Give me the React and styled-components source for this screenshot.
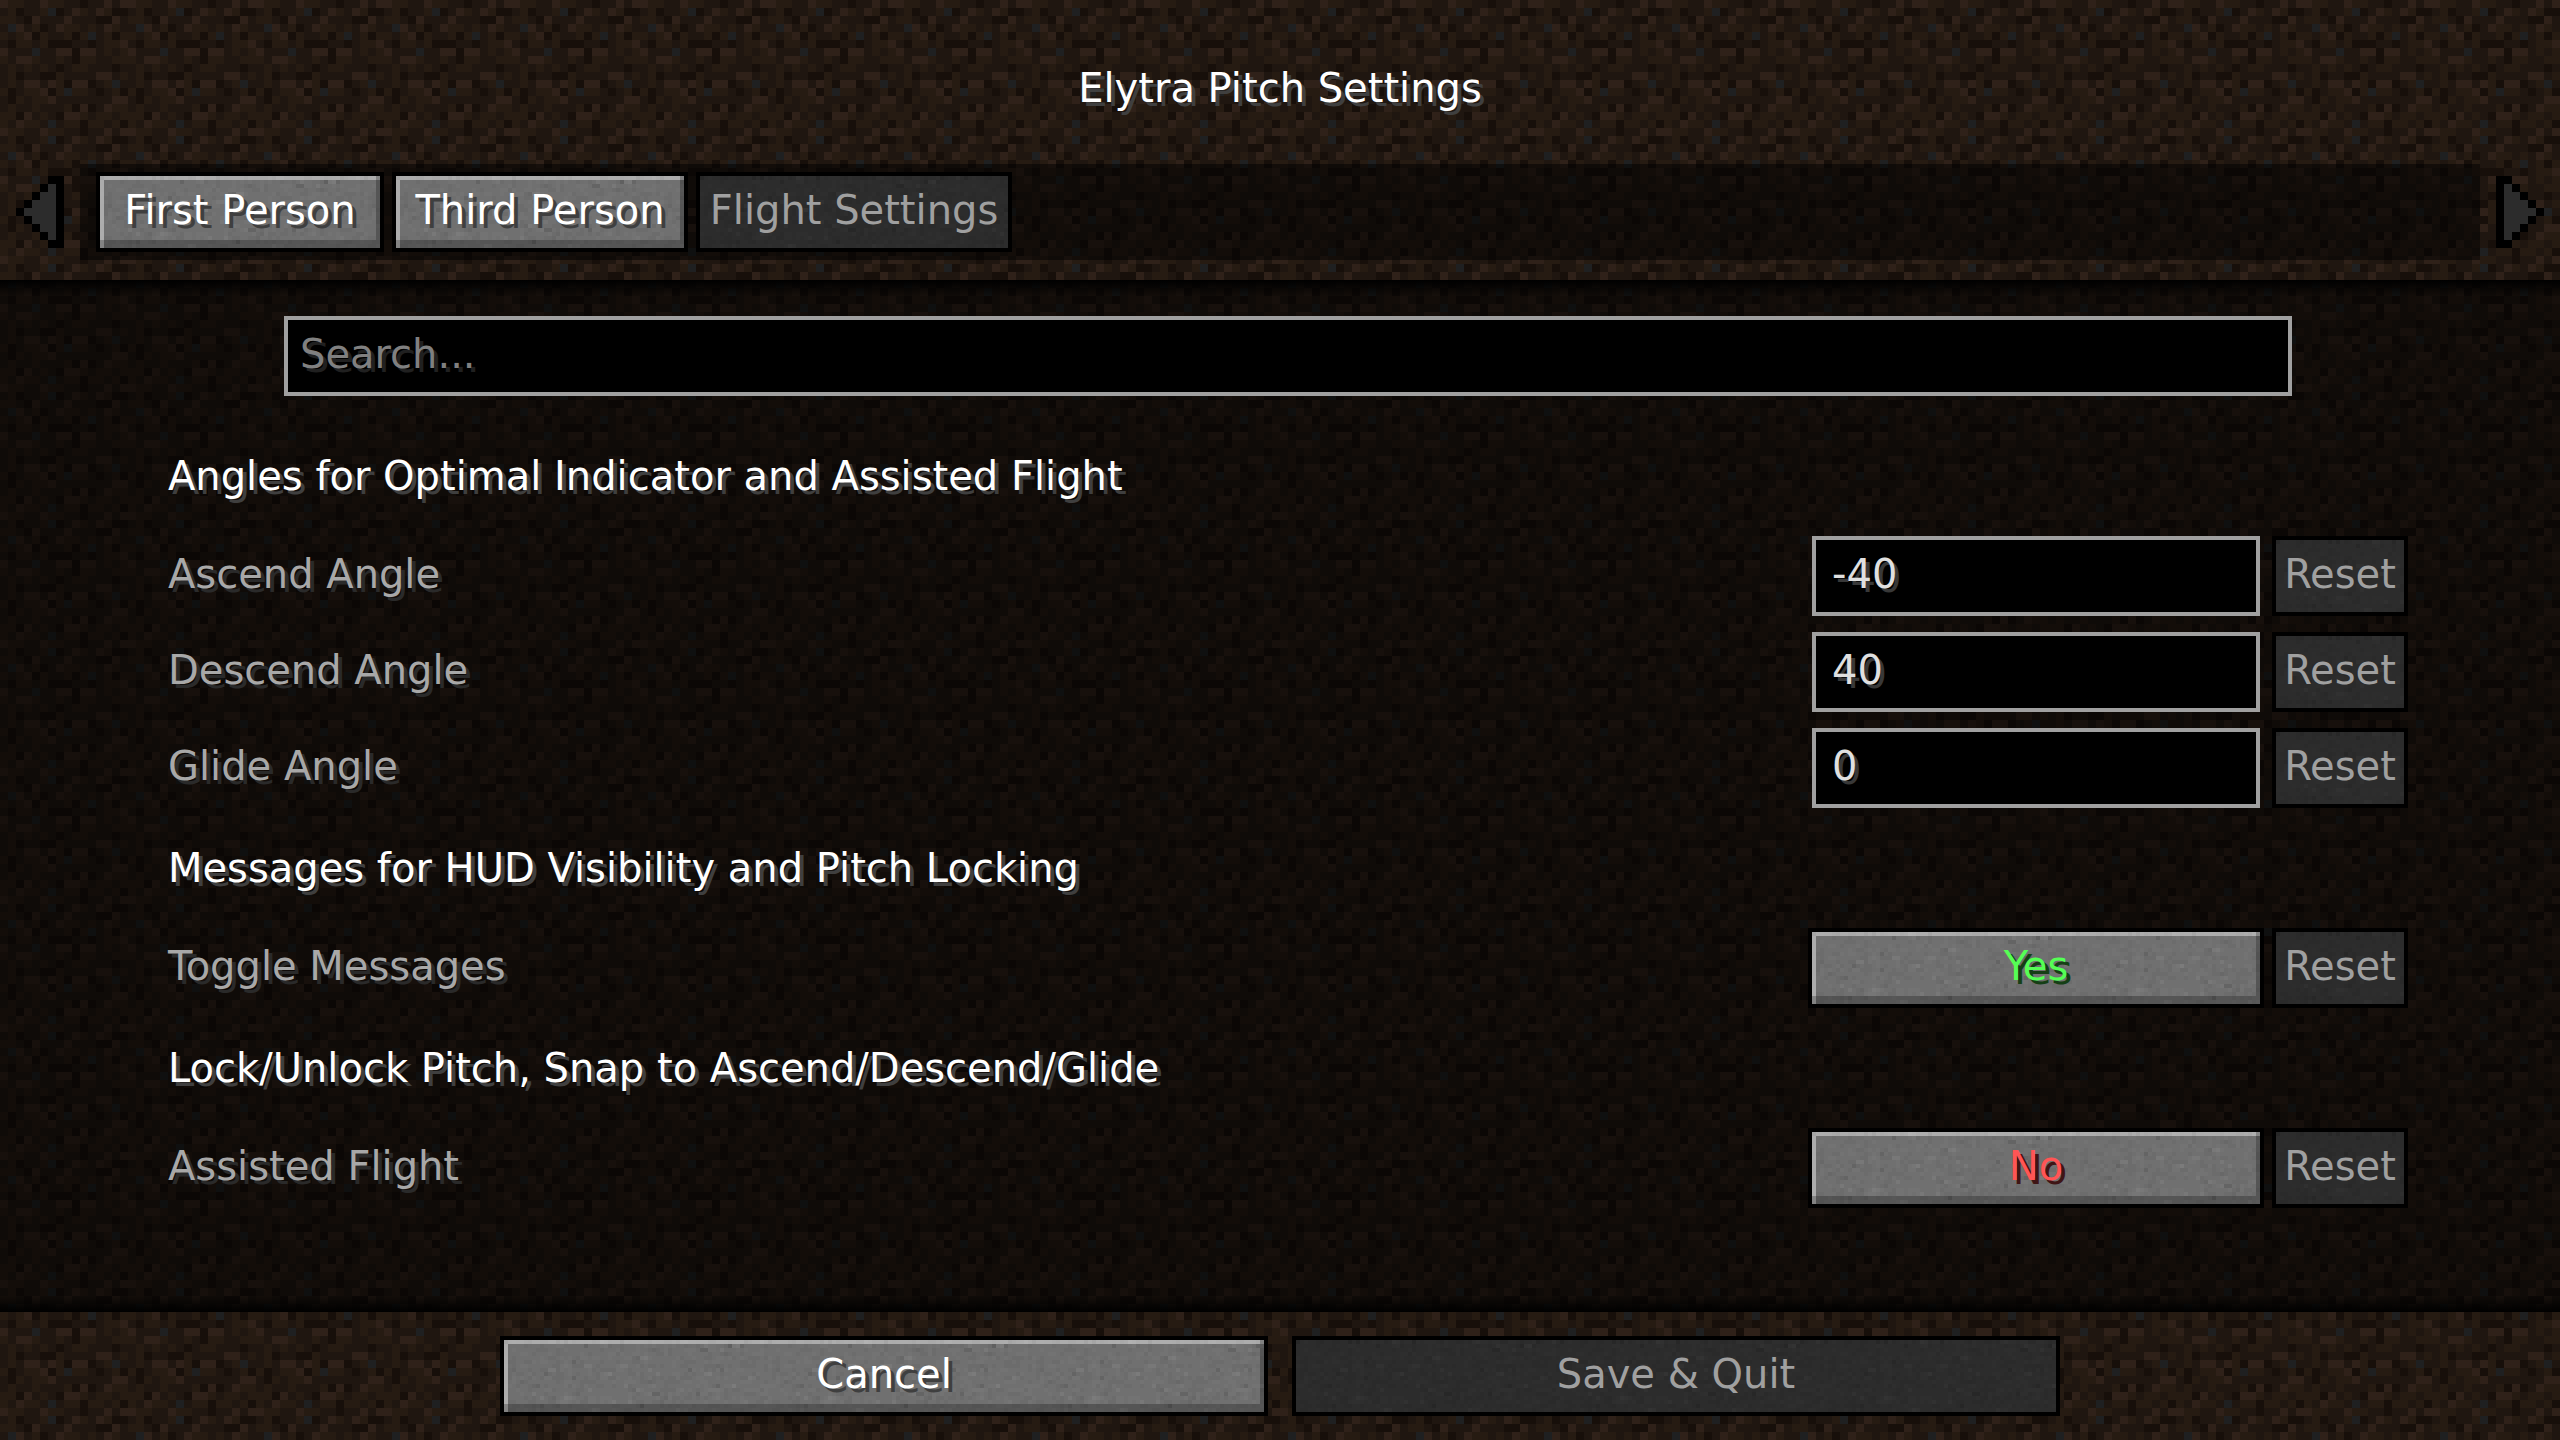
import React, { useState } from "react";
import styled, { createGlobalStyle, css } from "styled-components";

// one dirt block, a letter per texel
const DIRT = [
  "eccmmeccmmdmmeme",
  "mcdmmcgdmecmecdd",
  "ccmdemmmemmmddem",
  "mgemcdmeccmcmecm",
  "cmcedcmmcdcgmcdc",
  "mdccmcdddmmdmcce",
  "emmmgmmeedeemcmc",
  "cmeecmmcmdccmmcc",
  "mcmcmcmdmccmmmdm",
  "mcdmmddcmmmmeemc",
  "mcmeemecdeedmcgm",
  "cdmccedcgccmdmcd",
  "mdcmccemmmmmmmee",
  "mcmmcmmmcdedmecc",
  "ccdemcmdeecmccmc",
  "cmeccmgmccdccmcd"
];

const DIRT_COLORS = {
  d: "#170f0a",
  m: "#1f1610",
  c: "#261b12",
  e: "#2f2119",
  g: "#1f2021"
};

const svgUrl = (width, height, body) =>
  `url("data:image/svg+xml,${encodeURIComponent(
    `<svg xmlns="http://www.w3.org/2000/svg" width="${width}" height="${height}" shape-rendering="crispEdges">${body}</svg>`
  )}")`;

const rect = (x, y, w, size, fill) =>
  `<rect x="${x}" y="${y}" width="${w}" height="${size}" fill="${fill}"/>`;

const dirt = svgUrl(
  128,
  128,
  DIRT.map((row, y) =>
    [...row].map((t, x) => rect(x * 8, y * 8, 8, 8, DIRT_COLORS[t])).join("")
  ).join("")
);

// grain laid over the button colour
const makeStone = light => {
  let seed = 11;
  const next = () => {
    seed = (seed * 16807) % 2147483647;
    return seed / 2147483647;
  };
  let body = "";
  for (let y = 0; y < 18; y++) {
    for (let x = 0; x < 66; x++) {
      const n = next();
      const w = next() > 0.6 ? 8 : 4;
      if (n < 0.02) body += rect(x * 4, y * 4, 4, 4, "rgba(0,0,0,.11)");
      else if (n < 0.22) body += rect(x * 4, y * 4, w, 4, "rgba(0,0,0,.035)");
      else if (n > 0.98) body += rect(x * 4, y * 4, w, 4, `rgba(255,255,255,${light})`);
      else if (n > 0.8) body += rect(x * 4, y * 4, w, 4, `rgba(255,255,255,${light / 3})`);
    }
  }
  return svgUrl(264, 72, body);
};

const stone = makeStone(0.06);
const darkStone = makeStone(0.024);

const GlobalStyle = createGlobalStyle`
  body {
    margin: 0;
    background: #1f1610;
  }
  *, *::before, *::after {
    box-sizing: border-box;
  }
  button, input, h1, h2, label {
    font-family: "DejaVu Sans", sans-serif;
    font-size: 40px;
    font-weight: normal;
    line-height: 48px;
  }
`;

const Screen = styled.div`
  display: flex;
  flex-direction: column;
  min-height: 100vh;
  background: ${dirt};
`;

const Header = styled.header`
  padding: 64px 16px 20px;
`;

const Title = styled.h1`
  margin: 0 0 52px;
  color: #fff;
  text-align: center;
  text-shadow: 4px 4px #3f3f3f;
`;

const TabRow = styled.div`
  display: flex;
  align-items: center;
  gap: 16px;
`;

const TabBar = styled.nav`
  flex: 1;
  display: flex;
  gap: 8px;
  padding: 8px 16px;
  background: rgba(0, 0, 0, 0.5);
`;

const ArrowButton = styled.button`
  display: block;
  padding: 0;
  border: 0;
  background: none;
  line-height: 0;
`;

const Button = styled.button`
  width: ${p => p.$width || "auto"};
  height: 80px;
  padding: 0 0 4px;
  border: 4px solid #000;
  background: #707070 ${stone};
  box-shadow: inset -4px -8px rgba(0, 0, 0, 0.24),
    inset 4px 4px rgba(255, 255, 255, 0.42);
  color: ${p => p.$color || "#fff"};
  text-shadow: 4px 4px ${p => p.$shadow || "#3f3f3f"};
  white-space: nowrap;
  cursor: pointer;

  &:disabled {
    background: #2c2c2c ${darkStone};
    box-shadow: none;
    color: #a0a0a0;
    text-shadow: none;
    cursor: default;
  }
`;

const List = styled.main`
  flex: 1;
  padding: 36px 152px 36px 168px;
  background: linear-gradient(#000, transparent) top / 100% 16px no-repeat,
    linear-gradient(transparent, #000) bottom / 100% 16px no-repeat,
    rgba(0, 0, 0, 0.5);
`;

const fieldStyle = css`
  height: 80px;
  border: 4px solid #a0a0a0;
  border-radius: 0;
  background: #000;
  outline: none;
`;

const SearchWrap = styled.div`
  padding: 0 116px 36px;
`;

const Search = styled.input`
  ${fieldStyle}
  display: block;
  width: 100%;
  padding: 0 12px 4px;
  color: #e0e0e0;
  text-shadow: 4px 4px #383838;

  &::placeholder {
    color: #808080;
    text-shadow: 4px 4px #202020;
    opacity: 1;
  }
`;

const Section = styled.section`
  display: flex;
  flex-direction: column;
  gap: 16px;
  margin-bottom: 16px;
`;

const Heading = styled.h2`
  height: 88px;
  margin: 0;
  padding-top: 20px;
  color: #fff;
  text-shadow: 4px 4px #3f3f3f;
`;

const Row = styled.div`
  display: flex;
  align-items: center;
  gap: 8px;
`;

const Label = styled.label`
  flex: 1;
  padding-bottom: 4px;
  color: #a8a8a8;
  text-shadow: 4px 4px #2a2a2a;
`;

const NumberField = styled.input`
  ${fieldStyle}
  width: 448px;
  margin: 0 4px;
  padding: 0 16px 4px;
  color: #e0e0e0;
  text-shadow: 4px 4px #383838;
`;

const Footer = styled.footer`
  display: flex;
  justify-content: center;
  gap: 24px;
  padding: 24px;
`;

const LeftArrow = () => (
  <svg width="48" height="72" viewBox="0 0 6 9" shapeRendering="crispEdges">
    <path
      fill="#000"
      d="M4 0H6V9H4V8H3V7H2V6H1V5H0V4H1V3H2V2H3V1H4Z"
    />
    <path fill="#2c2c2c" d="M4 1H5V8H4V7H3V6H2V5H1V4H2V3H3V2H4Z" />
  </svg>
);

const RightArrow = () => (
  <svg width="48" height="72" viewBox="0 0 6 9" shapeRendering="crispEdges">
    <path
      fill="#000"
      d="M2 0H0V9H2V8H3V7H4V6H5V5H6V4H5V3H4V2H3V1H2Z"
    />
    <path fill="#2c2c2c" d="M2 1H1V8H2V7H3V6H4V5H5V4H4V3H3V2H2Z" />
  </svg>
);

const tabs = [
  { name: "First Person", width: "288px" },
  { name: "Third Person", width: "296px" },
  { name: "Flight Settings", width: "316px" }
];

const NumberRow = ({ id, label, initial }) => {
  const [value, setValue] = useState(initial);
  return (
    <Row>
      <Label htmlFor={id}>{label}</Label>
      <NumberField
        id={id}
        type="text"
        value={value}
        onChange={e => setValue(e.target.value)}
      />
      <Button
        $width="136px"
        disabled={value === initial}
        onClick={() => setValue(initial)}
      >
        Reset
      </Button>
    </Row>
  );
};

const ToggleRow = ({ id, label, initial }) => {
  const [on, setOn] = useState(initial);
  return (
    <Row>
      <Label htmlFor={id}>{label}</Label>
      <Button
        id={id}
        $width="456px"
        $color={on ? "#55ff55" : "#ff5555"}
        $shadow={on ? "#153f15" : "#3f1515"}
        onClick={() => setOn(!on)}
      >
        {on ? "Yes" : "No"}
      </Button>
      <Button
        $width="136px"
        disabled={on === initial}
        onClick={() => setOn(initial)}
      >
        Reset
      </Button>
    </Row>
  );
};

const App = () => {
  const [tab, setTab] = useState("Flight Settings");

  return (
    <Screen>
      <GlobalStyle />
      <Header>
        <Title>Elytra Pitch Settings</Title>
        <TabRow>
          <ArrowButton aria-label="Previous tabs" disabled>
            <LeftArrow />
          </ArrowButton>
          <TabBar>
            {tabs.map(({ name, width }) => (
              <Button
                key={name}
                $width={width}
                disabled={tab === name}
                onClick={() => setTab(name)}
              >
                {name}
              </Button>
            ))}
          </TabBar>
          <ArrowButton aria-label="Next tabs" disabled>
            <RightArrow />
          </ArrowButton>
        </TabRow>
      </Header>
      <List>
        <SearchWrap>
          <Search type="text" aria-label="Search" placeholder="Search..." />
        </SearchWrap>
        <Section>
          <Heading>Angles for Optimal Indicator and Assisted Flight</Heading>
          <NumberRow id="ascend" label="Ascend Angle" initial="-40" />
          <NumberRow id="descend" label="Descend Angle" initial="40" />
          <NumberRow id="glide" label="Glide Angle" initial="0" />
        </Section>
        <Section>
          <Heading>Messages for HUD Visibility and Pitch Locking</Heading>
          <ToggleRow id="messages" label="Toggle Messages" initial={true} />
        </Section>
        <Section>
          <Heading>Lock/Unlock Pitch, Snap to Ascend/Descend/Glide</Heading>
          <ToggleRow id="assisted" label="Assisted Flight" initial={false} />
        </Section>
      </List>
      <Footer>
        <Button $width="768px">Cancel</Button>
        <Button $width="768px" disabled>
          Save &amp; Quit
        </Button>
      </Footer>
    </Screen>
  );
};

export default App;
